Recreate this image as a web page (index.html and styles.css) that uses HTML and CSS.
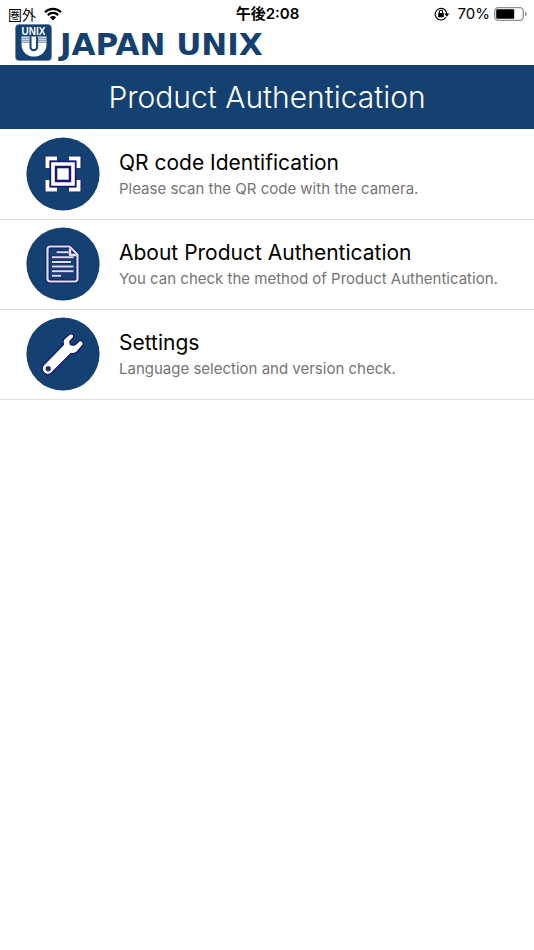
FILE: index.html
```html
<!DOCTYPE html>
<html lang="en">
<head>
<meta charset="utf-8">
<meta name="viewport" content="width=device-width, initial-scale=1">
<title>Product Authentication</title>
<link rel="stylesheet" href="styles.css">
</head>
<body>
<div class="status">
  <div class="status-side">
    <span class="carrier" lang="ja">圏外</span>
    <svg class="wifi" width="18" height="14" viewBox="0 0 18 14" aria-hidden="true">
      <path d="M1 5.2a11.4 11.4 0 0 1 16 0M3.8 8.1a7.4 7.4 0 0 1 10.4 0" fill="none" stroke="#000" stroke-width="2.3"/>
      <path d="M5.900 10.300a4.400 4.400 0 0 1 6.200 0L9 13.400z"/>
    </svg>
  </div>
  <time class="clock" lang="ja">午後2:08</time>
  <div class="status-side status-end">
    <svg class="lock" width="16" height="14" viewBox="0 0 16 14" aria-hidden="true">
      <path d="M11.900 10.300A5.800 5.800 0 1 1 12.800 7" fill="none" stroke="#000" stroke-width="1.200"/>
      <path d="M10.300 6.500h5l-2.500 3.200z"/>
      <rect x="4.200" y="6" width="5.600" height="4.200" rx=".5"/>
      <path d="M5.300 6.300V5a1.700 1.700 0 0 1 3.400 0v1.300" fill="none" stroke="#000" stroke-width="1.100"/>
    </svg>
    <span class="percent">70%</span>
    <svg class="battery" width="33" height="14" viewBox="0 0 33 14" aria-hidden="true">
      <rect x=".7" y=".7" width="28.600" height="12.600" rx="3.500" fill="#fff" stroke="#8f8f8f" stroke-width="1.300"/>
      <rect x="2.200" y="2.200" width="18" height="9.600" rx="1"/>
      <path d="M31 4.500q1.700.8 1.700 2.500T31 9.500z" fill="#8f8f8f"/>
    </svg>
  </div>
</div>
<div class="brand">
  <svg class="mark" width="37" height="37" viewBox="0 0 37 37" aria-hidden="true">
    <rect x=".5" y=".5" width="36" height="36" rx="3.500" fill="#154072" stroke="#5c7fa6" stroke-width=".6"/>
    <text class="mark-text" x="18.500" y="10.500" text-anchor="middle">UNIX</text>
    <path d="M6.500 12.500h25V21a12.500 11.500 0 0 1-25 0z" fill="#fff"/>
    <path d="M15.500 12.500V23a3.300 3.300 0 0 0 6.600 0V12.500" fill="none" stroke="#154072" stroke-width="2"/>
    <path d="M6.500 14.200h8M6.500 16.200h8M6.500 18.200h8M23.100 14.200h8.400M23.100 16.200h8.400M23.100 18.200h8.400" stroke="#154072" stroke-width=".7"/>
  </svg>
  <span class="wordmark">JAPAN UNIX</span>
</div>
<h1 class="title">Product Authentication</h1>
<nav class="menu" aria-label="Main menu">
  <a class="item" href="#scan">
    <svg class="icon" width="74" height="74" viewBox="0 0 74 74" aria-hidden="true">
      <circle cx="37" cy="37" r="36.600" fill="#154072"/>
      <path d="M21.500 31V21.500H31M43 21.500h9.500V31M52.500 43v9.500H43M31 52.500h-9.500V43" fill="none" stroke="#171575" stroke-width="5.500"/>
      <path d="M21.500 31V21.500H31M43 21.500h9.500V31M52.500 43v9.500H43M31 52.500h-9.500V43" fill="none" stroke="#fff" stroke-width="4"/>
      <path d="M27 27h20v20H27z" fill="none" stroke="#171575" stroke-width="6.500"/>
      <path d="M27 27h20v20H27z" fill="none" stroke="#fff" stroke-width="3.600"/>
      <rect x="30.500" y="30.500" width="13" height="13" fill="#fff" stroke="#171575" stroke-width="1.600"/>
    </svg>
    <span class="text">
      <span class="name">QR code Identification</span>
      <span class="note">Please scan the QR code with the camera.</span>
    </span>
  </a>
  <a class="item" href="#about">
    <svg class="icon" width="74" height="74" viewBox="0 0 74 74" aria-hidden="true">
      <circle cx="37" cy="37" r="36.600" fill="#154072"/>
      <g fill="none" stroke-linejoin="round">
        <path d="M24 19.500h19.500l8 8V52a2.500 2.500 0 0 1-2.500 2.500H24a2.500 2.500 0 0 1-2.500-2.500V22a2.500 2.500 0 0 1 2.500-2.500z" stroke="#171575" stroke-width="4"/>
        <path d="M24 19.500h19.500l8 8V52a2.500 2.500 0 0 1-2.500 2.500H24a2.500 2.500 0 0 1-2.500-2.500V22a2.500 2.500 0 0 1 2.500-2.500z" stroke="#e0e0ea" stroke-width="2.200"/>
        <path d="M30 25.300h11M26 30.300h21.500M26 35h19M26 39.500h21.500M26 44.300h21.500M26 48.700h9" stroke="#171575" stroke-width="3.200"/>
        <path d="M30.500 25.300h12M26 30.300h21.500M26 35h19M26 39.500h21.500M26 44.300h21.500M26 48.700h9" stroke="#e0e0ea" stroke-width="2"/>
        <path d="M44 21.500v6.500h6.500" stroke="#e0e0ea" stroke-width="2.400"/>
      </g>
    </svg>
    <span class="text">
      <span class="name">About Product Authentication</span>
      <span class="note">You can check the method of Product Authentication.</span>
    </span>
  </a>
  <a class="item" href="#settings">
    <svg class="icon" width="74" height="74" viewBox="0 0 74 74" aria-hidden="true">
      <circle cx="37" cy="37" r="36.600" fill="#154072"/>
      <path d="M17.500 48 37.500 27.500Q36.300 23.500 38.500 21.500L43.500 17.300Q45.500 16 47.500 18Q48.300 19.500 47 21L44 24.200Q43.300 27.800 46.200 28.200Q48.500 28.500 50 27L53 24Q55.500 23 57 25.500Q57.700 27.200 56.500 28.500L51 35Q49 37.300 45 36.500L25.500 56Q22 59 18.500 56.200L17 54.500Q15 51 17.500 48z" fill="#fff" stroke="#171575" stroke-width="1.200" stroke-linejoin="round"/>
      <rect x="20.200" y="49.800" width="4" height="4" rx="1" fill="#154072" stroke="#171575"/>
    </svg>
    <span class="text">
      <span class="name">Settings</span>
      <span class="note">Language selection and version check.</span>
    </span>
  </a>
</nav>
</body>
</html>
```
FILE: styles.css
```css
* {
  box-sizing: border-box;
}

body {
  margin: 0;
  min-height: 100vh;
  background: #fff;
  color: #000;
  font-family: Inter, "Noto Sans CJK JP", sans-serif;
}

svg {
  flex: none;
}

.status {
  display: grid;
  grid-template-columns: 1fr auto 1fr;
  align-items: center;
  height: 24px;
  padding: 3px 7px 0 8px;
  font-size: 15px;
  line-height: 20px;
}

.status-side {
  display: flex;
  align-items: center;
  gap: 8px;
}

.status-end {
  justify-content: flex-end;
  gap: 4px;
}

.carrier {
  font-family: "Noto Sans CJK JP", sans-serif;
  font-size: 14px;
}

.clock {
  font-weight: 600;
}

.lock {
  margin-right: 4px;
}

.brand {
  display: flex;
  align-items: center;
  gap: 8px;
  height: 41px;
  padding: 0 15px 4px;
  color: #154072;
}

.mark-text {
  fill: #fff;
  font-family: "Liberation Sans", sans-serif;
  font-size: 10px;
  font-weight: 700;
}

.wordmark {
  padding-top: 2px;
  font-family: "DejaVu Sans", sans-serif;
  font-size: 31px;
  font-weight: 700;
  line-height: 36px;
  white-space: nowrap;
}

.title {
  margin: 0;
  padding: 12px 16px;
  background: #154072;
  color: #fff;
  font-size: 30px;
  font-weight: 300;
  line-height: 40px;
  text-align: center;
}

.item {
  display: flex;
  align-items: center;
  gap: 19px;
  padding: 8px 26px;
  border-bottom: 1px solid #dedede;
  color: inherit;
  text-decoration: none;
}

.item + .item {
  padding-top: 7px;
}

.icon {
  display: block;
}

.text {
  display: flex;
  flex-direction: column;
  padding-top: 2px;
}

.name {
  font-size: 21px;
  line-height: 28px;
}

.note {
  color: #757575;
  font-size: 15px;
  line-height: 24px;
}
```
